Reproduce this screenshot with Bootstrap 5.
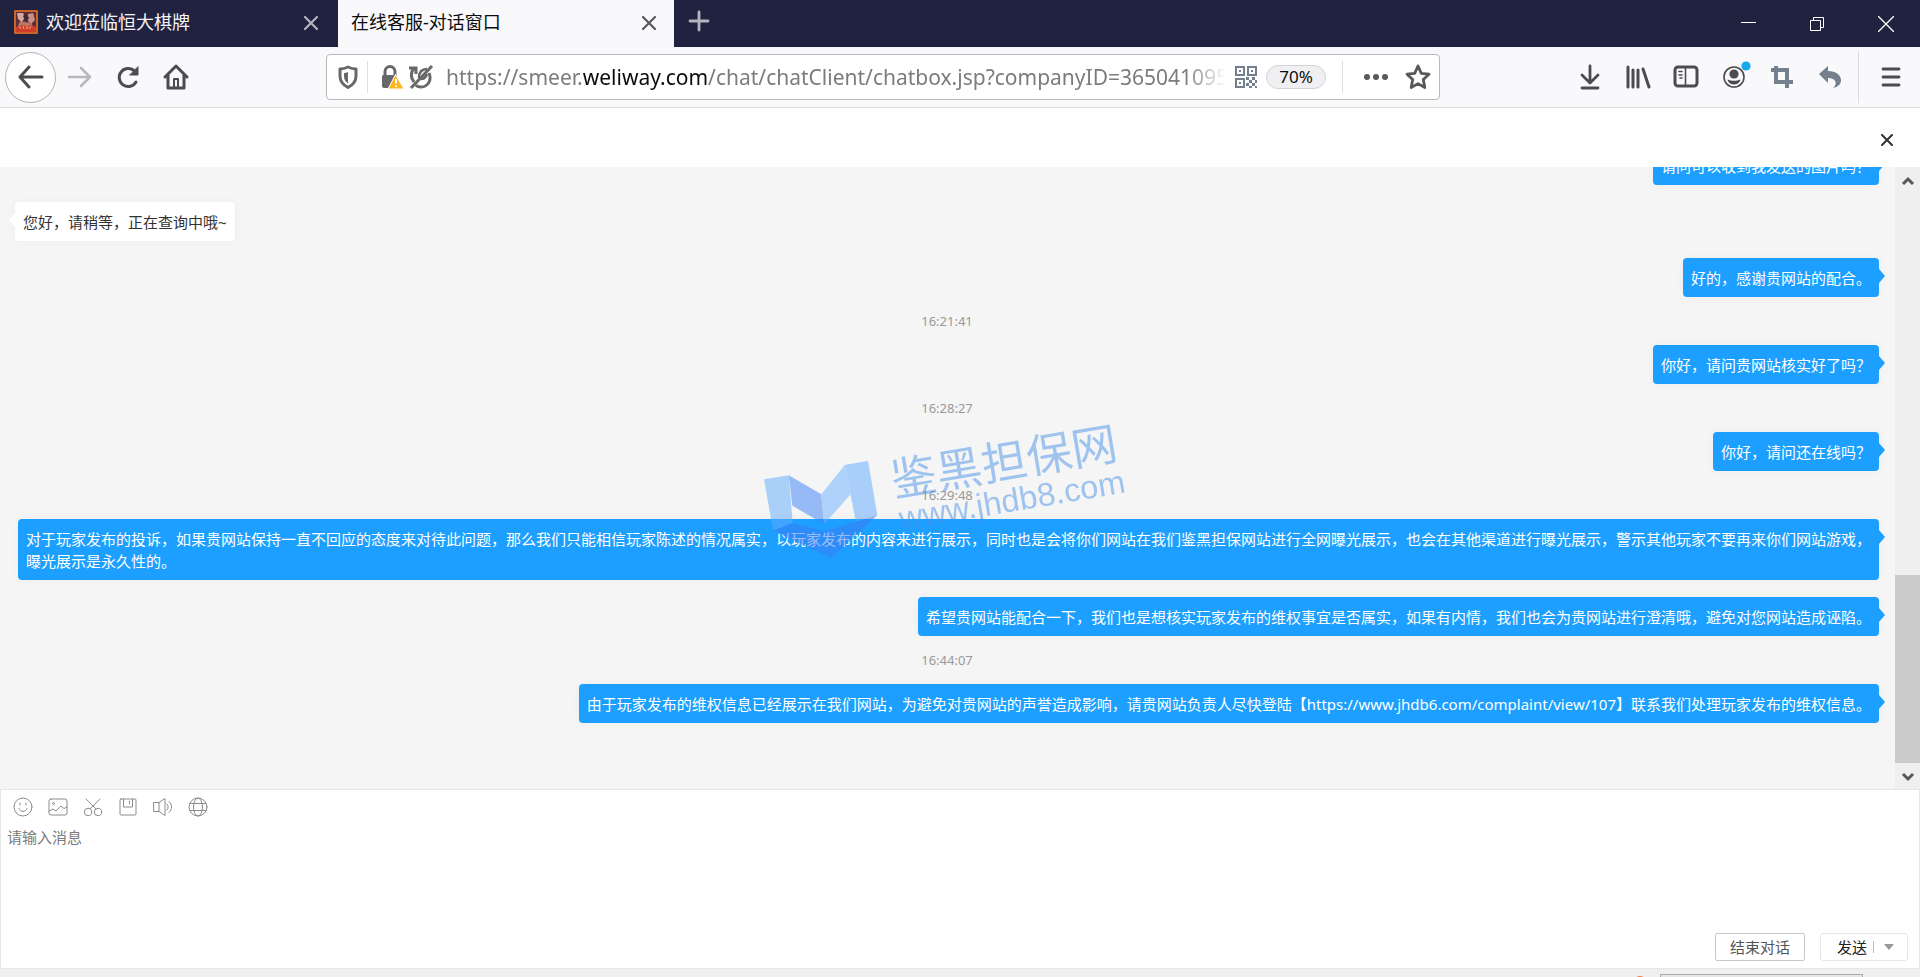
<!DOCTYPE html>
<html lang="zh-CN">
<head>
<meta charset="utf-8">
<meta name="viewport" content="width=device-width, initial-scale=1">
<title>在线客服-对话窗口</title>
<link rel="stylesheet" href="https://cdn.jsdelivr.net/npm/bootstrap@5.3.0/dist/css/bootstrap.min.css">
<style>
  :root { --ink: #4c4c4f; --chat-blue: #1c9fff; }
  body { font-family: "Noto Sans", "Noto Sans CJK SC", sans-serif; font-size: 15px; line-height: 22px; color: #222; background: #fff; }
  svg { display: block; flex: none; }
  button { border: 0; background: none; padding: 0; color: inherit; }
  .line-ico { fill: none; stroke: currentColor; stroke-linecap: round; stroke-linejoin: round; }

  /* tab strip */
  .tab-strip { background: #20223f; height: 47px; }
  .tab-item { width: 338px; height: 47px; padding: 0 16px 4px 14px; font-size: 18px; color: #f4f4fa; }
  .tab-item.current { width: 336px; background: #f9f9fb; color: #0c0c0d; padding-left: 13px; padding-right: 14px; }
  .tab-item .tab-x { color: #b4b4c0; margin-top: 3px; }
  .tab-item.current .tab-x { color: #58585c; }
  .new-tab { color: #b4b4c0; margin-left: 14px; padding-bottom: 5px; }
  .win-ctl { width: 69px; height: 42px; color: #fff; }

  /* toolbar */
  .tool-row { background: #f9f9fb; height: 61px; border-bottom: 1px solid #dcdce0; padding: 0 5px; color: var(--ink); }
  .back-btn { width: 51px; height: 51px; border: 1px solid #b4b4b8; border-radius: 50%; background: #fff; }
  .tool-btn { width: 48px; height: 48px; }
  .tool-rule { width: 1px; height: 52px; background: #dcdce0; }
  .nav-group { width: 321px; }
  .address { width: 1114px; height: 46px; border: 1px solid #b8b8bc; border-radius: 4px; background: #fff; color: #68686b; padding-left: 10px; padding-right: 8px; }
  .address-rule { width: 1px; height: 32px; background: #dedee2; }
  .address-text { font-size: 21px; line-height: 30px; margin-left: 12px; color: #7c7c7f; text-decoration: none; white-space: nowrap; overflow: hidden;
    -webkit-mask-image: linear-gradient(to right, #000 calc(100% - 40px), transparent); mask-image: linear-gradient(to right, #000 calc(100% - 40px), transparent); }
  .address-text b { font-weight: 400; color: #0c0c0d; }
  .zoom-pill { width: 60px; height: 24px; border: 1px solid #d2d2d8; border-radius: 12px; background: #f0f0f3; color: #0c0c0d; font-size: 17px; line-height: 20px; }

  /* chat */
  .chat-top { height: 59px; padding: 4px 27px 0 0; }
  .chat-log { background: #f5f5f5; overflow: hidden; gap: 17px; padding: 0 16px 66px 15px; }
  .bubble { position: relative; flex: none; padding: 9px 8px 8px; border-radius: 4px; box-shadow: 0 0 8px rgba(0,0,0,.04); }
  .bubble::after { content: ""; position: absolute; top: 11px; border: 7px solid transparent; }
  .bubble.mine { align-self: flex-end; background: var(--chat-blue); color: #fff; }
  .bubble.mine::after { left: 100%; border-left: 6px solid var(--chat-blue); border-right: 0; }
  .bubble.theirs { align-self: flex-start; background: #fff; color: #333; }
  .bubble.theirs::after { right: 100%; border-right: 6px solid #fff; border-left: 0; }
  .stamp { flex: none; text-align: center; font-size: 13px; line-height: 14px; color: #999; }
  .water { position: absolute; left: 50%; bottom: 209px; transform: translateX(-50%); pointer-events: none; }
  .bar { width: 25px; background: #efefef; color: #58585a; }
  .bar button { height: 26px; padding-top: 2px; }
  .bar-thumb { height: 33%; background: #cbcbcb; }

  /* composer */
  .composer { height: 180px; border: 1px solid #e6e6e6; color: #8c8c8c; }
  .composer-tools { gap: 15px; padding: 7px 12px 0; }
  .composer textarea { border: 0; resize: none; outline: 0; padding: 9px 6px; color: #333; background: none; }
  .composer textarea::placeholder { color: #7c7c7c; opacity: 1; }
  .composer-actions { gap: 15px; padding: 0 11px 7px; }
  .end-btn { width: 90px; height: 28px; border: 1px solid #c8c8c8; border-radius: 2px; color: #555; }
  .send-box { width: 88px; height: 28px; border: 1px solid #e8e8e8; border-radius: 3px; color: #222; }
  .send-rule { width: 1px; height: 12px; background: #bbb; }
  .foot { height: 8px; background: #f0f0f0; overflow: hidden; padding: 5px 57px 0 0; }
  .foot-box { width: 203px; height: 20px; border: 1px solid #aaa; background: #e6e6e6; }
  .foot-dot { width: 14px; height: 14px; border-radius: 50%; background: #f08050; margin: 2px 13px 0 0; }
</style>
</head>
<body class="d-flex flex-column vh-100 overflow-hidden">

<header>
  <div class="tab-strip d-flex align-items-center">
    <div class="tab-item d-flex align-items-center">
      <svg class="me-2" width="24" height="24" viewBox="0 0 24 24"><rect width="24" height="24" rx="1" fill="#c9642c"/><rect x="2" y="2" width="20" height="20" fill="#5d3038"/><path d="M3 3h6l2 4-3 5-4-3z" fill="#d8a79a"/><path d="M14 4l5-1 2 7-4 4-4-4z" fill="#c98f86"/><path d="M9 6l3-3 3 5-3 5z" fill="#3c2838"/><path d="M6 11l5 1 6 1 2 3H4z" fill="#b9796c"/><path d="M2 17l6-2 4 1 5-1 5 2v5H2z" fill="#cf3d28"/><path d="M5 16l2 3M9 16l1 3M13 16v3M17 16l-2 3" stroke="#e6b48a"/></svg>
      <span class="flex-grow-1">欢迎莅临恒大棋牌</span>
      <button class="tab-x" aria-label="关闭标签页"><svg class="line-ico" width="22" height="18" viewBox="0 0 22 18" stroke-width="2.200"><path d="M5 3l12 12M17 3L5 15"/></svg></button>
    </div>
    <div class="tab-item current d-flex align-items-center">
      <span class="flex-grow-1">在线客服-对话窗口</span>
      <button class="tab-x" aria-label="关闭标签页"><svg class="line-ico" width="22" height="18" viewBox="0 0 22 18" stroke-width="2.200"><path d="M5 3l12 12M17 3L5 15"/></svg></button>
    </div>
    <button class="new-tab" aria-label="新建标签页"><svg class="line-ico" width="22" height="22" viewBox="0 0 22 22" stroke-width="2.800"><path d="M11 2v18M2 11h18"/></svg></button>
    <div class="d-flex ms-auto">
      <button class="win-ctl d-grid justify-content-center align-content-center" aria-label="最小化"><svg width="16" height="16" viewBox="0 0 16 16"><path d="M1 6.500h15" stroke="#fff"/></svg></button>
      <button class="win-ctl d-grid justify-content-center align-content-center" aria-label="还原"><svg width="16" height="16" viewBox="0 0 16 16" fill="none" stroke="#fff"><path d="M1.500 4.500h10v10h-10zM4.500 4.500v-3h10v10h-3"/></svg></button>
      <button class="win-ctl d-grid justify-content-center align-content-center" aria-label="关闭"><svg width="16" height="16" viewBox="0 0 16 16"><path d="M0 0l16 16M16 0L0 16" stroke="#fff" stroke-width="1.300"/></svg></button>
    </div>
  </div>

  <div class="tool-row d-flex align-items-center">
    <div class="nav-group d-flex align-items-center flex-shrink-0">
      <button class="back-btn d-grid justify-content-center align-content-center" aria-label="后退"><svg class="line-ico" width="26" height="24" viewBox="0 0 26 24" stroke-width="3"><path d="M24 12H2M11 2L2 12l9 10"/></svg></button>
      <button class="tool-btn d-grid justify-content-center align-content-center" aria-label="前进"><svg class="line-ico" width="26" height="24" viewBox="0 0 26 24" stroke-width="2.600" color="#b9b9bc"><path d="M2 12h21M14 3l9 9-9 9"/></svg></button>
      <button class="tool-btn d-grid justify-content-center align-content-center" aria-label="刷新"><svg class="line-ico" width="24" height="24" viewBox="0 0 24 24" stroke-width="3"><path d="M20 17A9 9 0 1 1 18 5.500"/><path d="M22 2v8h-8z" fill="currentColor" stroke-width="1"/></svg></button>
      <button class="tool-btn d-grid justify-content-center align-content-center" aria-label="主页"><svg class="line-ico" width="26" height="26" viewBox="0 0 26 26" stroke-width="3"><path d="M2 13L13 2l11 11M5 11v13h16V11"/><path d="M11 23v-8h4v8" stroke-width="2"/></svg></button>
    </div>

    <div class="address d-flex align-items-center flex-shrink-1">
      <svg class="line-ico" width="22" height="24" viewBox="0 0 22 24" stroke-width="3"><path d="M11 2c3 1.500 5 2 8 2v7c0 5-3 9-8 11.500C6 20 3 16 3 11V4c3 0 5-.5 8-2z"/><path d="M11 7c-1.500.6-3 1-4 1v3.500c0 3 1.600 5.200 4 7z" fill="currentColor" stroke="none"/></svg>
      <span class="address-rule mx-2"></span>
      <svg class="ms-1" width="24" height="26" viewBox="0 0 24 26"><path d="M5 12V7.500a5 5 0 0 1 10 0V12" fill="none" stroke="#68686b" stroke-width="3"/><path d="M3 11h14v4l-5 9H4a2 2 0 0 1-2-2V12z" fill="#68686b"/><path d="M15.500 10.500L24 25H8z" fill="#ffb71b" stroke="#fff" stroke-width="1"/><path d="M16 15v4.500M16 21.500v1.500" stroke="#fff" stroke-width="2"/></svg>
      <svg class="ms-1" width="26" height="26" viewBox="0 0 26 26" fill="none" stroke="#68686b" stroke-width="3"><path d="M6 18C2 13 3 8 6 4M1 4h7v6M21 9c3 7-1 14-8 14-2 0-4-.5-5-2"/><path d="M11 14c0-6 3-9 8-9M13 15c3 0 5-2 6-5" stroke-width="2.500"/><path d="M3 24L24 2" stroke-width="3"/></svg>
      <a class="address-text flex-grow-1" href="#">https://smeer.<b>weliway.com</b>/chat/chatClient/chatbox.jsp?companyID=365041095</a>
      <button class="ms-2" aria-label="二维码"><svg width="24" height="24" viewBox="0 0 24 24" fill="#75808e"><path d="M1 1h10v10H1zm2 2v6h6V3zM13 1h10v10H13zm2 2v6h6V3zM1 13h10v10H1zm2 2v6h6v-6z" fill-rule="evenodd"/><path d="M5 5h2v2H5zM17 5h2v2h-2zM5 17h2v2H5zM12 12h3v3h-3zM18 12h3v3h-3zM15 15h3v3h-3zM21 15h2v3h-2zM12 18h3v3h-3zM18 18h3v3h-3zM15 21h3v2h-3zM21 21h2v2h-2z"/></svg></button>
      <button class="zoom-pill ms-2">70%</button>
      <span class="address-rule ms-3 me-3"></span>
      <button class="ms-1" aria-label="页面操作"><svg width="26" height="24" viewBox="0 0 26 24" fill="#58585b"><circle cx="4" cy="12" r="3"/><circle cx="13" cy="12" r="3"/><circle cx="22" cy="12" r="3"/></svg></button>
      <button class="ms-3" aria-label="添加书签"><svg class="line-ico" width="26" height="26" viewBox="0 0 26 26" stroke-width="2.800" color="#58585b"><path d="M13 2l3.300 7.300 7.700.9-5.700 5.400 1.500 7.900L13 19.600l-6.800 3.900 1.500-7.900L2 10.200l7.700-.9z"/></svg></button>
    </div>

    <div class="d-flex align-items-center ms-auto">
      <button class="tool-btn d-grid justify-content-center align-content-center" aria-label="下载"><svg class="line-ico" width="22" height="26" viewBox="0 0 22 26" stroke-width="2.800"><path d="M11 2v17M3 11l8 8 8-8M3 24h16"/></svg></button>
      <button class="tool-btn d-grid justify-content-center align-content-center" aria-label="书库"><svg class="line-ico" width="26" height="24" viewBox="0 0 26 24" stroke-width="3"><path d="M3 2v20M8 5v17M13 5v17M18 4l6 18"/></svg></button>
      <button class="tool-btn d-grid justify-content-center align-content-center" aria-label="侧栏"><svg class="line-ico" width="26" height="24" viewBox="0 0 26 24" stroke-width="3"><rect x="2" y="2" width="22" height="19" rx="3"/><path d="M12.500 3v18M6 6.500h3M6 10h3M7 13h2" stroke-width="1.600"/></svg></button>
      <button class="tool-btn d-grid justify-content-center align-content-center" aria-label="账户"><svg width="36" height="36" viewBox="0 0 36 36"><circle cx="18" cy="18" r="10" fill="none" stroke="#4c4c4f" stroke-width="1.600"/><circle cx="18" cy="15" r="4.600" fill="#4c4c4f"/><path d="M11.500 20.500c4 1.800 9 1.800 13 0-.7 3.300-3.300 5-6.500 5s-5.800-1.700-6.500-5z" fill="#4c4c4f"/><circle cx="30" cy="7" r="4.600" fill="#18a8f0"/></svg></button>
      <button class="tool-btn d-grid justify-content-center align-content-center" aria-label="截图"><svg width="24" height="24" viewBox="0 0 24 24" fill="none" stroke="#75808e" stroke-width="4"><path d="M6 1v16h17M1 5h16v18"/></svg></button>
      <button class="tool-btn d-grid justify-content-center align-content-center" aria-label="撤销"><svg width="24" height="24" viewBox="0 0 24 24" fill="#75808e"><path d="M1 9l9-8v5c8 0 13 4 13 9.500 0 3.500-3 6.500-8 7.500 5-4 3-10-5-10v5z"/></svg></button>
      <span class="tool-rule ms-1"></span>
      <button class="tool-btn ms-2 d-grid justify-content-center align-content-center" aria-label="菜单"><svg class="line-ico" width="20" height="22" viewBox="0 0 20 22" stroke-width="2.800"><path d="M2 3h16M2 11h16M2 19h16"/></svg></button>
    </div>
  </div>
</header>

<div class="chat-top d-flex align-items-center justify-content-end flex-shrink-0">
  <button aria-label="关闭对话"><svg class="line-ico" width="12" height="12" viewBox="0 0 12 12" stroke-width="2" color="#333"><path d="M1 1l10 10M11 1L1 11"/></svg></button>
</div>

<main class="d-flex flex-grow-1 overflow-hidden">
  <div class="position-relative d-flex flex-grow-1 overflow-hidden">
    <section class="chat-log d-flex flex-column justify-content-end flex-grow-1">
      <div class="bubble mine">请问可以收到我发送的图片吗？</div>
      <div class="bubble theirs">您好，请稍等，正在查询中哦~</div>
      <div class="bubble mine">好的，感谢贵网站的配合。</div>
      <time class="stamp">16:21:41</time>
      <div class="bubble mine">你好，请问贵网站核实好了吗？</div>
      <time class="stamp">16:28:27</time>
      <div class="bubble mine">你好，请问还在线吗？</div>
      <time class="stamp">16:29:48</time>
      <div class="bubble mine">对于玩家发布的投诉，如果贵网站保持一直不回应的态度来对待此问题，那么我们只能相信玩家陈述的情况属实，以玩家发布的内容来进行展示，同时也是会将你们网站在我们鉴黑担保网站进行全网曝光展示，也会在其他渠道进行曝光展示，警示其他玩家不要再来你们网站游戏，<br>曝光展示是永久性的。</div>
      <div class="bubble mine">希望贵网站能配合一下，我们也是想核实玩家发布的维权事宜是否属实，如果有内情，我们也会为贵网站进行澄清哦，避免对您网站造成诬陷。</div>
      <time class="stamp">16:44:07</time>
      <div class="bubble mine">由于玩家发布的维权信息已经展示在我们网站，为避免对贵网站的声誉造成影响，请贵网站负责人尽快登陆【https://www.jhdb6.com/complaint/view/107】联系我们处理玩家发布的维权信息。</div>
    </section>
    <svg class="water" width="420" height="180" viewBox="0 0 1260 540" opacity=".5">
      <path d="M78 238l74-12 13 150-60 16z" fill="#62acff"/>
      <path d="M152 226l98 57 9 90-96-56z" fill="#3a80f8"/>
      <path d="M250 283l70-88 18 88-80 90z" fill="#6cb0ff"/>
      <path d="M320 195l70-13 28 163-60 42z" fill="#60a8ff"/>
      <path d="M105 392l60-24 93 26 160-49-138 130z" fill="#3c7cf4"/>
      <g fill="#4b92ea" transform="rotate(-9.500 470 300)">
        <text x="470" y="290" font-size="137" font-weight="400" font-family="Noto Sans CJK SC, sans-serif">鉴黑担保网</text>
        <text x="474" y="392" font-size="98" font-family="Liberation Sans, sans-serif">www.jhdb8.com</text>
      </g>
    </svg>
  </div>
  <div class="bar d-flex flex-column flex-shrink-0">
    <button class="d-grid justify-content-center align-content-center" aria-label="向上滚动"><svg width="14" height="10" viewBox="0 0 14 10" fill="none" stroke="#58585a" stroke-width="3"><path d="M2 8l5-5 5 5"/></svg></button>
    <div class="flex-grow-1 d-flex flex-column justify-content-end"><div class="bar-thumb"></div></div>
    <button class="d-grid justify-content-center align-content-center" aria-label="向下滚动"><svg width="14" height="10" viewBox="0 0 14 10" fill="none" stroke="#58585a" stroke-width="3"><path d="M2 2l5 5 5-5"/></svg></button>
  </div>
</main>

<form class="composer d-flex flex-column flex-shrink-0">
  <div class="composer-tools d-flex">
    <button type="button" aria-label="表情"><svg class="line-ico" width="20" height="20" viewBox="0 0 20 20"><circle cx="10" cy="10" r="9"/><path d="M6 11.500c1 4 7 4 8 0M7 6v2M13 6v2"/></svg></button>
    <button type="button" aria-label="图片"><svg class="line-ico" width="20" height="20" viewBox="0 0 20 20"><rect x="1" y="2" width="18" height="16" rx="2"/><circle cx="5.500" cy="6.500" r="1"/><path d="M1 14l4-2 3 2 5-5 3 2.500 3-1.500"/></svg></button>
    <button type="button" aria-label="截屏"><svg class="line-ico" width="20" height="20" viewBox="0 0 20 20"><circle cx="5" cy="15" r="3.700"/><circle cx="15" cy="15" r="3.700"/><path d="M3 2l10 10M17 2L7 12"/></svg></button>
    <button type="button" aria-label="保存"><svg class="line-ico" width="20" height="20" viewBox="0 0 20 20"><rect x="2" y="2" width="16" height="16" rx="1"/><path d="M5.500 2v8h9V2M11.500 4v3"/></svg></button>
    <button type="button" aria-label="声音"><svg class="line-ico" width="20" height="20" viewBox="0 0 20 20"><path d="M1 5.500h5v9H1zM6 5.500l6-4v17l-6-4M14 7c1.500 1.500 1.500 4.500 0 6M16 4.500c3.500 3 3.500 8 0 11"/></svg></button>
    <button type="button" aria-label="网站"><svg class="line-ico" width="20" height="20" viewBox="0 0 20 20"><circle cx="10" cy="10" r="9"/><ellipse cx="10" cy="10" rx="4.500" ry="9"/><path d="M2 6.500h16M2 13.500h16"/></svg></button>
  </div>
  <textarea class="flex-grow-1 w-100" aria-label="消息" placeholder="请输入消息"></textarea>
  <div class="composer-actions d-flex justify-content-end">
    <button type="button" class="end-btn">结束对话</button>
    <div class="send-box d-flex align-items-center justify-content-between ps-3 pe-2">
      <button type="submit">发送</button>
      <span class="send-rule"></span>
      <button type="button" aria-label="发送选项"><svg width="20" height="8" viewBox="0 0 20 8"><path d="M5 1h10l-5 6z" fill="#999"/></svg></button>
    </div>
  </div>
</form>

<footer class="foot d-flex justify-content-end flex-shrink-0">
  <span class="foot-dot"></span>
  <div class="foot-box"></div>
</footer>

<script src="https://cdn.jsdelivr.net/npm/bootstrap@5.3.0/dist/js/bootstrap.bundle.min.js"></script>
</body>
</html>
